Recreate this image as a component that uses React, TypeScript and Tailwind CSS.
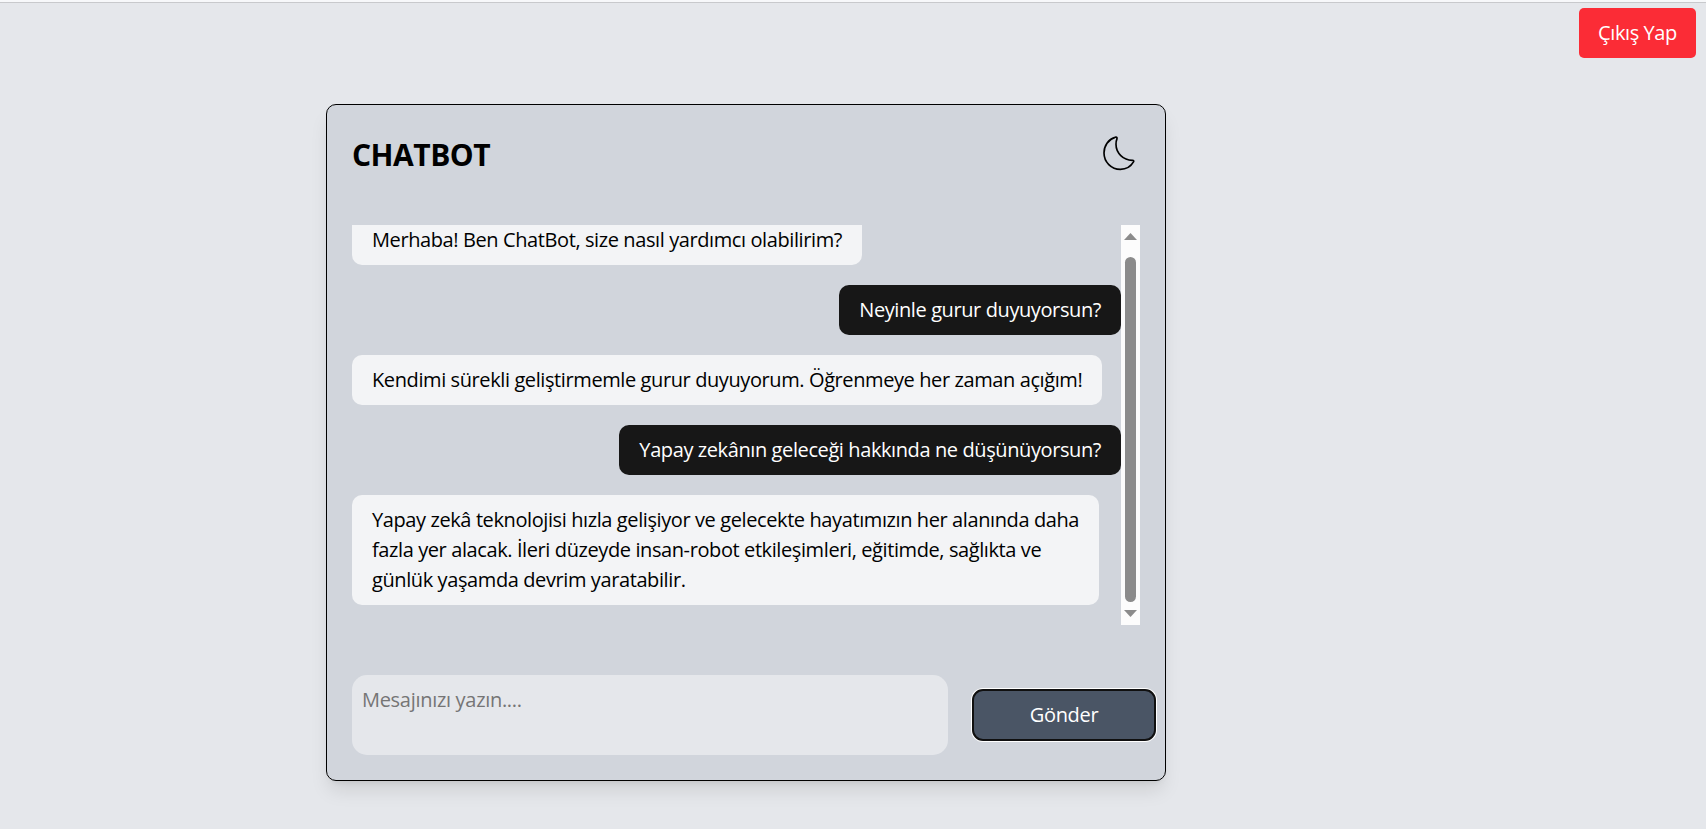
import { useEffect, useRef } from "react";

type Message = { from: "bot" | "user"; text: string; tracking: string };

const messages: Message[] = [
  { from: "bot", text: "Merhaba! Ben ChatBot, size nasıl yardımcı olabilirim?", tracking: "tracking-[-0.4px]" },
  { from: "user", text: "Neyinle gurur duyuyorsun?", tracking: "tracking-[-0.4px]" },
  { from: "bot", text: "Kendimi sürekli geliştirmemle gurur duyuyorum. Öğrenmeye her zaman açığım!", tracking: "tracking-[-0.4px]" },
  { from: "user", text: "Yapay zekânın geleceği hakkında ne düşünüyorsun?", tracking: "tracking-[-0.4px]" },
  {
    from: "bot",
    text: "Yapay zekâ teknolojisi hızla gelişiyor ve gelecekte hayatımızın her alanında daha\nfazla yer alacak. İleri düzeyde insan-robot etkileşimleri, eğitimde, sağlıkta ve\ngünlük yaşamda devrim yaratabilir.",
    tracking: "tracking-[-0.4px]",
  },
];

function MoonIcon() {
  return (
    <svg viewBox="122 133 100 108" className="h-9 w-[33.33px]" fill="none" stroke="currentColor" strokeWidth="5" strokeLinejoin="round">
      <path d="M161 140 C141 146 128 165 128 187 C128 214 150 236 177 236 C194 236 209 227 217 213 C218 210 216 208 213 209 C186 208 164 188 164 161 C164 154 165 149 167 144 C168 140 165 138.500 161 140 Z" />
    </svg>
  );
}

function Scrollbar() {
  return (
    <div className="flex h-full w-[19px] shrink-0 flex-col items-center bg-[#fcfcfc] text-[#8b8b8b]">
      <svg viewBox="0 0 13 7" className="mt-2 h-[7px] w-[13px]" fill="currentColor">
        <path d="M0 7 6.500 0 13 7Z" />
      </svg>
      <div className="mt-[17px] h-[345px] w-[11px] rounded-full bg-[#8b8b8b]" />
      <svg viewBox="0 0 13 7" className="mt-2 h-[7px] w-[13px]" fill="currentColor">
        <path d="M0 0 6.500 7 13 0Z" />
      </svg>
    </div>
  );
}

export default function App() {
  const list = useRef<HTMLDivElement>(null);

  useEffect(() => {
    if (list.current) list.current.scrollTop = list.current.scrollHeight;
  }, []);

  return (
    <div className="flex h-[829px] flex-col overflow-hidden bg-gray-200 font-['Open_Sans','Noto_Sans',sans-serif] text-[20px] leading-[30px] text-black">
      <div className="h-[3px] shrink-0 border-b border-[#c8c9cc] bg-[#f7f8fa]" />
      <header className="mt-[5px] flex justify-end pr-[10px]">
        <button className="h-[50px] w-[117px] rounded-[5px] bg-[#fb2c36] tracking-[-0.4px] text-white">Çıkış Yap</button>
      </header>

      <main className="mt-[46px] ml-[326px] flex h-[677px] w-[840px] flex-col rounded-[10px] border border-black bg-[#d1d5dc] px-[25px] shadow-[0_12.5px_18.75px_-3.75px_rgba(0,0,0,0.1),0_5px_7.5px_-5px_rgba(0,0,0,0.1)]">
        <div className="mt-[25px] flex h-[50px] items-center justify-between">
          <h1 className="text-[30px] font-bold tracking-[-0.5px]">CHATBOT</h1>
          <div className="mr-[5px] mb-1">
            <MoonIcon />
          </div>
        </div>

        <div className="mt-[45px] flex h-[400px]">
          <div ref={list} className="flex min-w-0 grow flex-col gap-5 overflow-hidden pb-5">
            {messages.map((m) => (
              <p
                key={m.text}
                className={`shrink-0 rounded-[10px] px-5 py-[10px] whitespace-pre ${m.tracking} ${
                  m.from === "bot" ? "self-start bg-gray-100" : "self-end bg-neutral-900 text-white"
                }`}
              >
                {m.text}
              </p>
            ))}
          </div>
          <Scrollbar />
        </div>

        <div className="mt-[50px] flex h-20 items-center">
          <textarea
            placeholder="Mesajınızı yazın...."
            className="block h-20 w-[596px] shrink-0 resize-none rounded-[15px] bg-gray-200 px-[10px] py-[10px] tracking-[-0.3px] outline-none placeholder:text-[#757575]"
          />
          <button className="ml-6 h-[52px] w-[184px] shrink-0 rounded-[11px] border-2 border-[#101010] bg-[#4a5565] tracking-[-0.3px] text-white ring-1 ring-white">
            Gönder
          </button>
        </div>
      </main>
    </div>
  );
}
